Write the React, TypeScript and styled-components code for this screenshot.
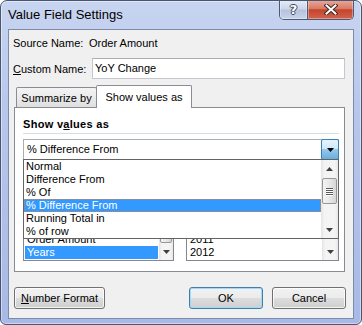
import React from 'react';
import styled, { createGlobalStyle } from 'styled-components';

const GlobalStyle = createGlobalStyle`
  html, body { margin: 0; padding: 0; }
  body {
    background: #ffffff;
    font-family: "Liberation Sans", Arial, sans-serif;
    font-size: 11px;
    color: #000;
  }
  * { box-sizing: border-box; }
`;

const Window = styled.div`
  width: 362px;
  height: 325px;
  border: 1px solid #4a5670;
  border-radius: 7px 7px 6px 6px;
  background: linear-gradient(180deg, #c8d5f0 0%, #b6c6ec 35%, #a8b9e5 100%);
  box-shadow: inset 0 0 0 1px rgba(255, 255, 255, 0.45);
  display: flex;
  flex-direction: column;
  overflow: hidden;
`;

const TitleBar = styled.div`
  height: 28px;
  flex-shrink: 0;
  display: flex;
  align-items: flex-start;
  padding: 0 7px;
`;

const Title = styled.div`
  font-size: 13px;
  line-height: 16px;
  padding-top: 6px;
`;

const Captions = styled.div`
  margin-left: auto;
  margin-top: -1px;
  height: 20px;
  display: flex;
  border: 1px solid #4b5878;
  border-top: none;
  border-radius: 0 0 5px 5px;
  overflow: hidden;
`;

const CaptionButton = styled.div<{ $close?: boolean }>`
  width: ${(p) => (p.$close ? 46 : 27)}px;
  display: flex;
  align-items: center;
  justify-content: center;
  border-left: ${(p) => (p.$close ? '1px solid #4b5878' : 'none')};
  background: ${(p) =>
    p.$close
      ? 'linear-gradient(180deg, #e9aa9c 0%, #d97a63 45%, #c5432c 52%, #d4634a 100%)'
      : 'linear-gradient(180deg, #e6ecf7 0%, #ccd6ea 48%, #b5c2dc 52%, #c9d4e9 100%)'};
  box-shadow: inset 0 0 0 1px rgba(255, 255, 255, 0.35);
`;

const HelpGlyph = styled.span`
  font-family: "DejaVu Sans", sans-serif;
  font-weight: bold;
  font-size: 13px;
  color: #fff;
  text-shadow: 1px 0 0 #3d4659, -1px 0 0 #3d4659, 0 1px 0 #3d4659, 0 -1px 0 #3d4659;
  line-height: 14px;
`;

const Client = styled.div`
  flex: 1;
  margin: 0 7px 5px 7px;
  border: 1px solid #7d8aa8;
  background: #f0f0f0;
  padding: 7px 8px 0 5px;
  display: flex;
  flex-direction: column;
`;

const InfoRow = styled.div`
  display: flex;
  align-items: center;
  height: 13px;
  line-height: 13px;
`;

const FieldRow = styled.div`
  display: flex;
  align-items: center;
  height: 21px;
  margin-top: 8px;
`;

const Label = styled.span<{ $width: number }>`
  width: ${(p) => p.$width}px;
  flex-shrink: 0;
  margin-left: -1px;
`;

const TextBox = styled.div`
  flex: 1;
  height: 21px;
  background: #fff;
  border: 1px solid #c3c7cf;
  border-top-color: #abadb3;
  padding-left: 2px;
  line-height: 19px;
`;

const TabStrip = styled.div`
  display: flex;
  align-items: flex-start;
  height: 22px;
  margin-top: 6px;
`;

const Tab = styled.div<{ $active?: boolean; $width: number }>`
  position: relative;
  width: ${(p) => p.$width}px;
  height: ${(p) => (p.$active ? 23 : 20)}px;
  margin-top: ${(p) => (p.$active ? 0 : 2)}px;
  margin-left: ${(p) => (p.$active ? -1 : 2)}px;
  z-index: ${(p) => (p.$active ? 2 : 1)};
  border: 1px solid #898c95;
  border-bottom: none;
  border-radius: 2px 2px 0 0;
  background: ${(p) => (p.$active ? '#ffffff' : 'linear-gradient(180deg, #f3f3f3 0%, #ebebeb 50%, #dedede 100%)')};
  text-align: center;
  line-height: ${(p) => (p.$active ? 22 : 21)}px;
`;

const Panel = styled.div`
  height: 165px;
  border: 1px solid #898c95;
  background: #fff;
  padding: 10px 5px 10px 8px;
  display: flex;
  flex-direction: column;
`;

const SectionLabel = styled.div`
  font-weight: bold;
  letter-spacing: 0.3px;
  height: 13px;
  line-height: 13px;
`;

const Separator = styled.div`
  height: 1px;
  margin-top: 2px;
  background: #d5dfe5;
`;

const ComboWrap = styled.div`
  position: relative;
  margin-top: 5px;
`;

const Combo = styled.div`
  height: 21px;
  display: flex;
  border: 1px solid #abadb3;
  background: #fff;
`;

const ComboText = styled.div`
  flex: 1;
  padding-left: 3px;
  line-height: 19px;
`;

const DropButton = styled.div`
  width: 18px;
  margin: -1px -1px -1px 0;
  border: 1px solid #3c7fb1;
  border-radius: 2px;
  background: linear-gradient(180deg, #e6f4fc 0%, #cfe9f9 45%, #93c9ec 50%, #6aaedc 100%);
  display: flex;
  align-items: center;
  justify-content: center;
`;

const Popup = styled.div`
  position: absolute;
  left: 0;
  right: 0;
  top: 20px;
  height: 80px;
  z-index: 5;
  border: 1px solid #646464;
  background: #fff;
  display: flex;
`;

const Items = styled.div`
  flex: 1;
  display: flex;
  flex-direction: column;
`;

const Item = styled.div<{ $selected?: boolean }>`
  height: 13px;
  line-height: 13px;
  padding-left: 2px;
  white-space: nowrap;
  color: ${(p) => (p.$selected ? '#fff' : '#000')};
  background: ${(p) => (p.$selected ? '#3399ff' : 'transparent')};
  outline: ${(p) => (p.$selected ? '1px dotted #d8843c' : 'none')};
  outline-offset: -1px;
`;

const ScrollBar = styled.div<{ $width: number }>`
  width: ${(p) => p.$width}px;
  flex-shrink: 0;
  display: flex;
  flex-direction: column;
  background: linear-gradient(90deg, #e4e4e4 0%, #f4f4f4 20%, #f4f4f4 80%, #e8e8e8 100%);
`;

const ArrowBox = styled.div`
  height: 17px;
  flex-shrink: 0;
  display: flex;
  align-items: center;
  justify-content: center;
`;

const Track = styled.div`
  flex: 1;
  display: flex;
  flex-direction: column;
  align-items: center;
`;

const Thumb = styled.div<{ $top: number; $height: number }>`
  margin-top: ${(p) => p.$top}px;
  width: calc(100% - 2px);
  height: ${(p) => p.$height}px;
  border: 1px solid #979797;
  border-radius: 2px;
  background: linear-gradient(90deg, #f3f3f3 0%, #e8e8e8 50%, #d6d6d6 100%);
  display: flex;
  flex-direction: column;
  align-items: center;
  justify-content: center;
  gap: 1px;
`;

const Grip = styled.div`
  width: 7px;
  height: 1px;
  background: #5a5a5a;
  box-shadow: 0 1px 0 #fff;
`;

/* the Base field / Base item captions sit under the open drop-down */
const BaseGap = styled.div`
  height: 13px;
  margin-top: 7px;
`;

const ListRow = styled.div`
  display: flex;
  gap: 12px;
  margin-top: 3px;
`;

const ListBox = styled.div<{ $width: number }>`
  width: ${(p) => p.$width}px;
  height: 78px;
  border: 1px solid #828790;
  background: #fff;
  display: flex;
  overflow: hidden;
`;

const ListItems = styled.div`
  flex: 1;
  display: flex;
  flex-direction: column;
  justify-content: flex-end;
  padding: 0 1px 1px 1px;
  overflow: hidden;
`;

const ListItem = styled.div<{ $selected?: boolean }>`
  height: 13px;
  flex-shrink: 0;
  line-height: 13px;
  padding-left: 2px;
  color: ${(p) => (p.$selected ? '#fff' : '#000')};
  background: ${(p) => (p.$selected ? '#3399ff' : 'transparent')};
`;

const ButtonRow = styled.div`
  display: flex;
  margin-top: 15px;
  margin-right: -1px;
`;

const Button = styled.div<{ $width: number; $default?: boolean; $push?: number }>`
  width: ${(p) => p.$width}px;
  height: 22px;
  margin-left: ${(p) => (p.$push === undefined ? 0 : `${p.$push}px`)};
  border: 1px solid ${(p) => (p.$default ? '#3c7fb1' : '#707070')};
  border-radius: 3px;
  background: linear-gradient(180deg, #f2f2f2 0%, #ebebeb 50%, #dddddd 50%, #cfcfcf 100%);
  box-shadow: inset 0 0 0 1px ${(p) => (p.$default ? '#a6d8f5' : 'rgba(255, 255, 255, 0.75)')};
  text-align: center;
  line-height: 20px;
`;

const AutoSpacer = styled.div`
  flex: 1;
`;

const Arrow = ({ up }: { up?: boolean }) => (
  <svg width="7" height="4" viewBox="0 0 7 4">
    <polygon points={up ? '3.5,0 7,4 0,4' : '0,0 7,0 3.5,4'} fill="#404040" />
  </svg>
);

const CloseGlyph = () => (
  <svg width="14" height="11" viewBox="0 0 14 11">
    <path d="M2.5 1.5 L11.5 9.5 M11.5 1.5 L2.5 9.5" stroke="#3b2a28" strokeWidth="4" strokeLinecap="square" />
    <path d="M2.5 1.5 L11.5 9.5 M11.5 1.5 L2.5 9.5" stroke="#ffffff" strokeWidth="2" strokeLinecap="square" />
  </svg>
);

const options = ['Normal', 'Difference From', '% Of', '% Difference From', 'Running Total in', '% of row'];
const baseFields = ['Order Amount', 'Years'];
const baseItems = ['2011', '2012'];

const App = () => {
  return (
    <>
      <GlobalStyle />
      <Window>
        <TitleBar>
          <Title>Value Field Settings</Title>
          <Captions>
            <CaptionButton>
              <HelpGlyph>?</HelpGlyph>
            </CaptionButton>
            <CaptionButton $close>
              <CloseGlyph />
            </CaptionButton>
          </Captions>
        </TitleBar>
        <Client>
          <InfoRow>
            <Label $width={76}>Source Name:</Label>
            <span>Order Amount</span>
          </InfoRow>
          <FieldRow>
            <Label $width={79}>
              <u>C</u>ustom Name:
            </Label>
            <TextBox>YoY Change</TextBox>
          </FieldRow>
          <TabStrip>
            <Tab $width={81}>Summarize by</Tab>
            <Tab $width={96} $active>
              Show values as
            </Tab>
          </TabStrip>
          <Panel>
            <SectionLabel>
              Show v<u>a</u>lues as
            </SectionLabel>
            <Separator />
            <ComboWrap>
              <Combo>
                <ComboText>% Difference From</ComboText>
                <DropButton>
                  <svg width="7" height="4" viewBox="0 0 7 4">
                    <polygon points="0,0 7,0 3.5,4" fill="#000" />
                  </svg>
                </DropButton>
              </Combo>
              <Popup>
                <Items>
                  {options.map((o) => (
                    <Item key={o} $selected={o === '% Difference From'}>
                      {o}
                    </Item>
                  ))}
                </Items>
                <ScrollBar $width={17}>
                  <ArrowBox>
                    <Arrow up />
                  </ArrowBox>
                  <Track>
                    <Thumb $top={1} $height={26}>
                      <Grip />
                      <Grip />
                      <Grip />
                      <Grip />
                    </Thumb>
                  </Track>
                  <ArrowBox>
                    <Arrow />
                  </ArrowBox>
                </ScrollBar>
              </Popup>
            </ComboWrap>
            <BaseGap />
            <ListRow>
              <ListBox $width={151}>
                <ListItems>
                  {baseFields.map((f) => (
                    <ListItem key={f} $selected={f === 'Years'}>
                      {f}
                    </ListItem>
                  ))}
                </ListItems>
                <ScrollBar $width={14}>
                  <ArrowBox>
                    <Arrow up />
                  </ArrowBox>
                  <Track>
                    <Thumb $top={0} $height={42} />
                  </Track>
                  <ArrowBox>
                    <Arrow />
                  </ArrowBox>
                </ScrollBar>
              </ListBox>
              <ListBox $width={153}>
                <ListItems>
                  {baseItems.map((f) => (
                    <ListItem key={f}>{f}</ListItem>
                  ))}
                </ListItems>
                <ScrollBar $width={16}>
                  <ArrowBox>
                    <Arrow up />
                  </ArrowBox>
                  <Track />
                  <ArrowBox>
                    <Arrow />
                  </ArrowBox>
                </ScrollBar>
              </ListBox>
            </ListRow>
          </Panel>
          <ButtonRow>
            <Button $width={91}>
              <u>N</u>umber Format
            </Button>
            <AutoSpacer />
            <Button $width={74} $default>
              OK
            </Button>
            <Button $width={74} $push={9}>
              Cancel
            </Button>
          </ButtonRow>
        </Client>
      </Window>
    </>
  );
};

export default App;
